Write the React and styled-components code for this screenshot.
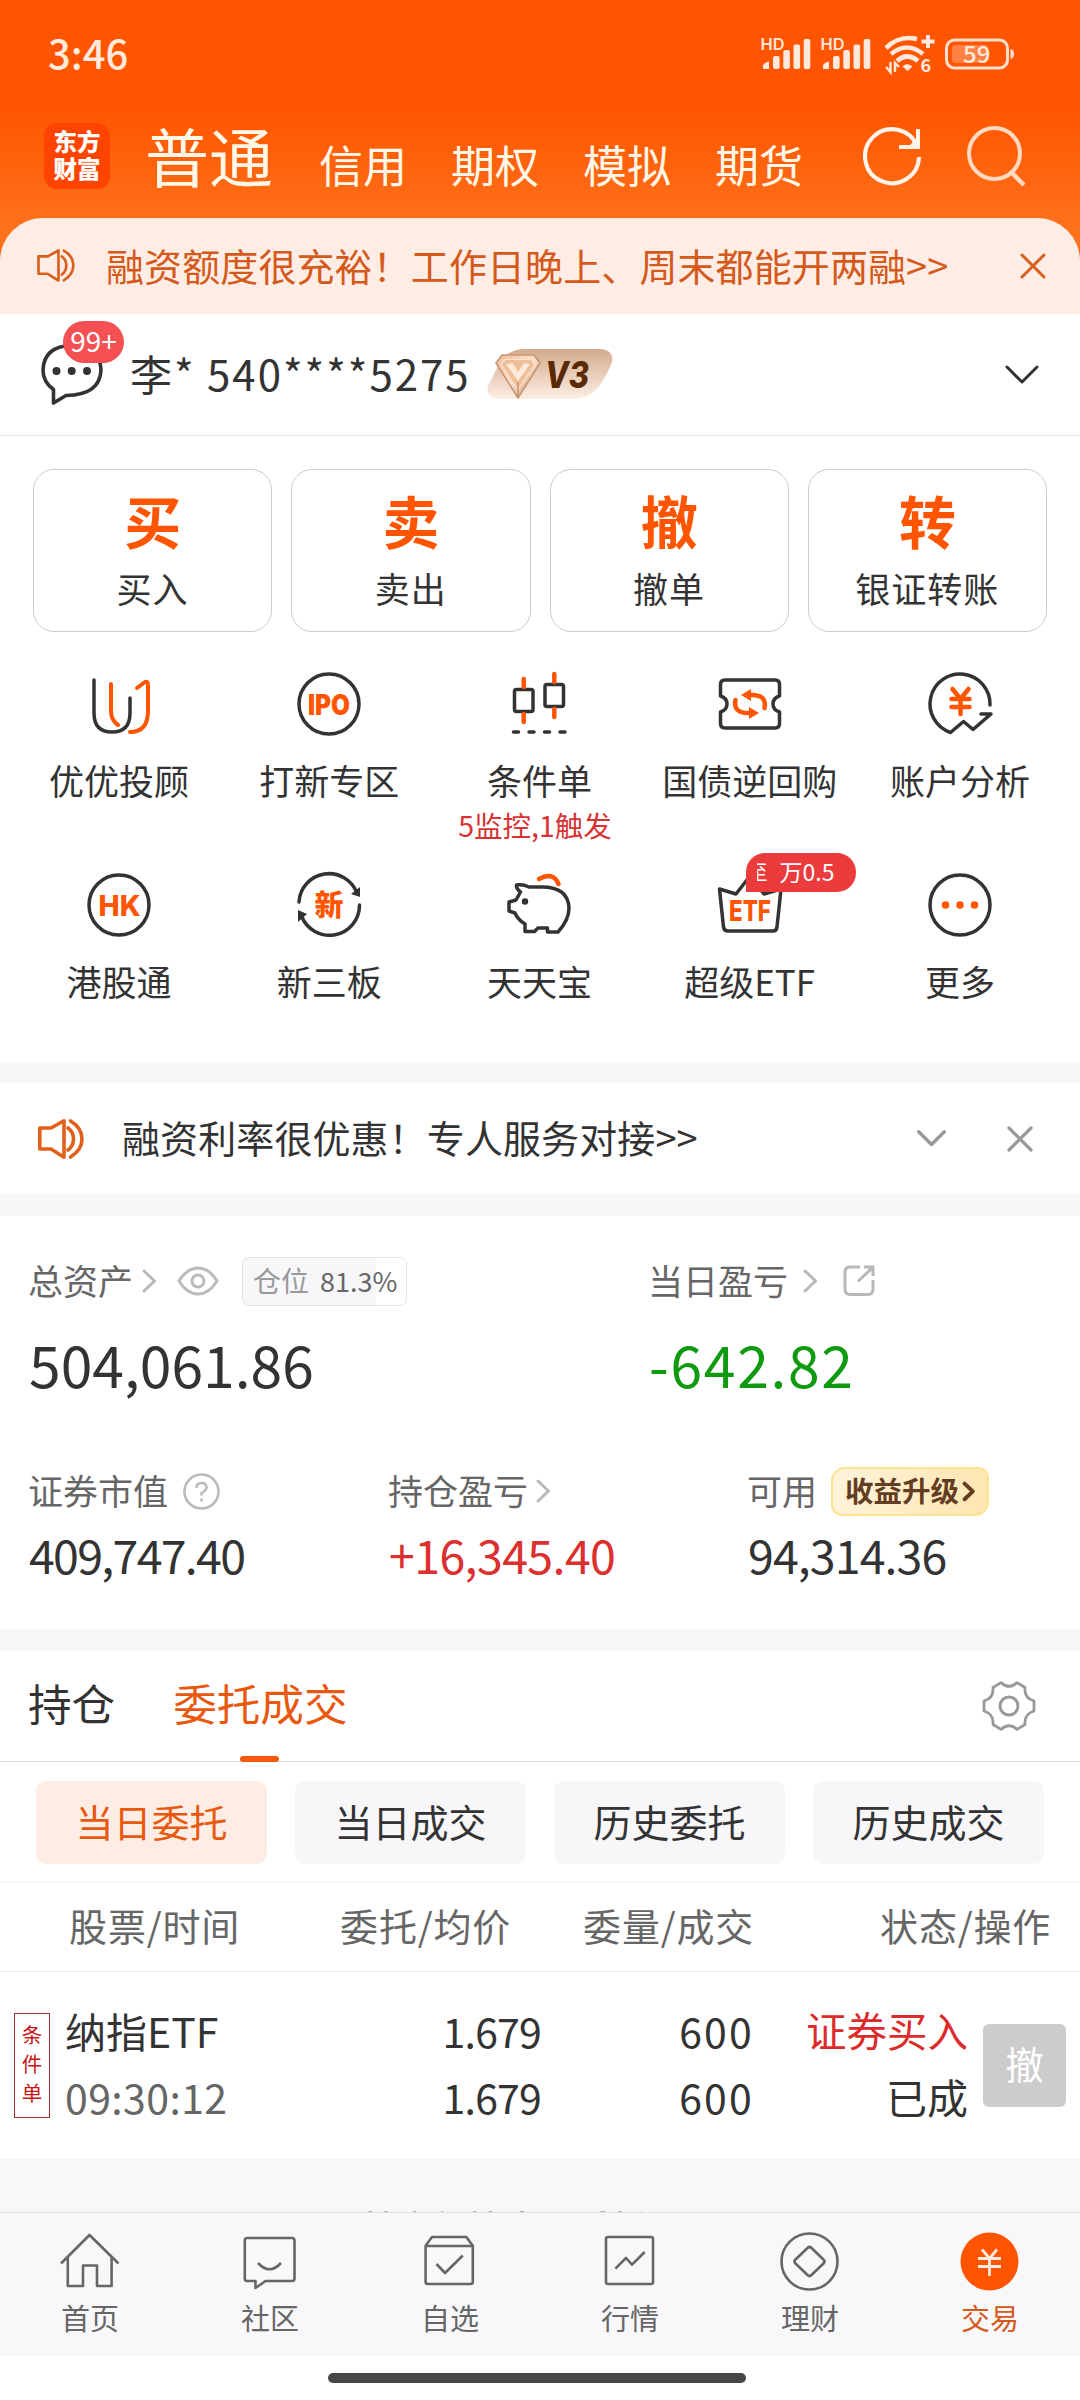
import React from 'react';
import styled, { createGlobalStyle } from 'styled-components';

const INK = '#333'
const FIRE = '#ff5500'

const Mark = styled.text`
  font-family: Inter, "Noto Sans", sans-serif;
`

const tabs = ['信用', '期权', '模拟', '期货']

const trades = [
  { mark: '买', label: '买入' },
  { mark: '卖', label: '卖出' },
  { mark: '撤', label: '撤单' },
  { mark: '转', label: '银证转账' },
]

const Speaker = ({ width, color, stroke }) => (
  <svg width={width} height={width * 40 / 46} viewBox="0 0 46 40" fill="none" stroke={color} strokeWidth={stroke} strokeLinejoin="round">
    <path d="M1.8 9H13L26 1.8V38.2L13 30H1.8Z" />
    <path d="M30 9Q35.5 13 35.5 20T30 31M32.5 2Q44 9 44 20T32.5 38" strokeLinecap="round" />
  </svg>
)

const Cross = ({ size, color, stroke = 3 }) => (
  <svg width={size} height={size} viewBox="0 0 26 26" fill="none" stroke={color} strokeWidth={stroke} strokeLinecap="round">
    <path d="M2 2L24 24M24 2L2 24" />
  </svg>
)

const Down = ({ width, color, stroke = 3 }) => (
  <svg width={width} height={width * 0.56} viewBox="0 0 34 19" fill="none" stroke={color} strokeWidth={stroke} strokeLinecap="round" strokeLinejoin="round">
    <path d="M2 2L17 17L32 2" />
  </svg>
)

const Next = ({ color = '#b8b8b8', stroke = 3, width = 14 }) => (
  <svg width={width} height={width * 24 / 14} viewBox="0 0 14 24" fill="none" stroke={color} strokeWidth={stroke} strokeLinecap="round" strokeLinejoin="round">
    <path d="M2 2L12.5 12L2 22" />
  </svg>
)

const Signal = () => (
  <svg width="50" height="34" viewBox="0 0 50 34" fill="#ffe8dc">
    <Mark x="-0.5" y="13" fontSize="16" fontWeight="600" textLength="24" lengthAdjust="spacingAndGlyphs">HD</Mark>
    <path d="M2 32V29Q2 26 8 24.500V32Q8 32 8 32Z" />
    <rect x="12" y="19" width="6.600" height="13" rx="2" />
    <rect x="22.300" y="13" width="6.600" height="19" rx="2" />
    <rect x="32.500" y="7.500" width="6.600" height="24.500" rx="2" />
    <rect x="42.700" y="2" width="6.600" height="30" rx="2" />
  </svg>
)

const Wifi = () => (
  <svg width="50" height="38" viewBox="0 0 50 38" fill="none" stroke="#ffe8dc" strokeWidth="4.600">
    <path d="M1 13Q14 0 32 4" />
    <path d="M6 19Q22 6 38 19" />
    <path d="M12 26Q22 17 33 26" />
    <path d="M17.500 31.500Q22 27 27.500 31.500L22.500 36Z" fill="#ffe8dc" stroke="none" />
    <path d="M43 0V13M36.500 6.500H49.500" strokeWidth="4" />
    <path d="M5.500 27V37L1 32M10 37V28L14 32" strokeWidth="2.400" />
    <text x="35.500" y="37" fontSize="18" fontWeight="700" fill="#ffe8dc" stroke="none">6</text>
  </svg>
)

const Battery = () => (
  <svg width="70" height="32" viewBox="0 0 70 32">
    <rect x="1.500" y="2" width="61" height="28" rx="8" fill="none" stroke="#ffe0cf" strokeWidth="3" />
    <rect x="7" y="7" width="36" height="18" rx="4" fill="#ff8244" />
    <path d="M65.500 11Q69 11.500 69 16T65.500 21Z" fill="#ffe0cf" />
    <text x="18" y="24.500" fontSize="24" fontWeight="500" fill="#ffe8dc">59</text>
  </svg>
)

const Gem = () => (
  <svg width="126" height="52" viewBox="0 0 126 52">
    <defs>
      <linearGradient id="plate" x1="0" y1="0" x2="0" y2="1">
        <stop offset="0" stopColor="#d3ab8c" />
        <stop offset="1" stopColor="#fdeee3" />
      </linearGradient>
      <linearGradient id="stone" x1="0" y1="0" x2="1" y2="1">
        <stop offset="0" stopColor="#eebd98" />
        <stop offset="0.500" stopColor="#fbe0c9" />
        <stop offset="1" stopColor="#c08a63" />
      </linearGradient>
    </defs>
    <path d="M38 0H113Q127 1 125 13Q121 24 113 36Q103 50 84 50H11Q-2 49 1 37L12 15Q20 0 38 0Z" fill="url(#plate)" />
    <path d="M15 6H47L53 14L31 49L9 14Z" fill="url(#stone)" stroke="#c89674" strokeWidth="1.600" strokeLinejoin="round" />
    <path d="M18 10.500H44L48 15L31 41L14 15Z" fill="#efbf9a" stroke="#fbe3d0" strokeWidth="1.200" />
    <path d="M19 15L26 14.500L31 23L37 14.500L43 15L31 32Z" fill="#fdeadb" />
    <path d="M31 33V47" stroke="#b98560" strokeWidth="1.200" />
    <Mark x="58" y="39" fontSize="37" fontWeight="800" fontStyle="italic" fill="#5a2a06" textLength="44" lengthAdjust="spacingAndGlyphs">V3</Mark>
  </svg>
)

// feature glyphs share one 70x70 canvas
const glyphs = {
  advisor: (
    <>
      <path d="M10 11V44Q10 63 28 63T46 44V29" />
      <path d="M27 15V42Q27 51 34 56M53 19L61 13Q64 12 64 16V42Q64 63 46 63" stroke={FIRE} strokeWidth="4" />
    </>
  ),
  ipo: (
    <>
      <circle cx="35" cy="35" r="30" />
      <Mark x="14" y="45.500" fontSize="28" fontWeight="900" textLength="42" lengthAdjust="spacingAndGlyphs" fill={FIRE} stroke="none">IPO</Mark>
    </>
  ),
  candle: (
    <>
      <rect x="10.500" y="20.500" width="18.500" height="22" rx="2" />
      <rect x="41" y="15.500" width="18.500" height="22" rx="2" />
      <path d="M19.700 10V18M19.700 45V53M50.300 5V13M50.300 40V48" stroke={FIRE} strokeWidth="4.500" />
      <path d="M9.500 63H14.500M25 63H30M40.500 63H45.500M56 63H61" />
    </>
  ),
  bond: (
    <>
      <path d="M10 11H60Q64.500 11 64.500 15.500V27Q58 29 58 35T64.500 43V54.500Q64.500 59 60 59H10Q5.500 59 5.500 54.500V43Q12 41 12 35T5.500 27V15.500Q5.500 11 10 11Z" />
      <path d="M20.500 31Q18 44 33 44H36M49.500 39Q52 26 37 26H34" stroke={FIRE} strokeWidth="4.500" />
      <path d="M36 20V32L26 26ZM34 38V50L44 44Z" fill={FIRE} stroke="none" />
    </>
  ),
  analysis: (
    <>
      <path d="M65 36A30 30 0 1 0 25.500 63.500L38.500 52.500L48 60.500L66 45H56" />
      <path d="M27.500 20L35.500 30L43.500 20M35.500 30V45M26.500 30H44.500M26.500 38H44.500" stroke={FIRE} strokeWidth="4.500" />
    </>
  ),
  hk: (
    <>
      <circle cx="35" cy="35" r="30" />
      <Mark x="14.500" y="45.500" fontSize="28.500" fontWeight="800" textLength="42" lengthAdjust="spacingAndGlyphs" fill={FIRE} stroke="none">HK</Mark>
    </>
  ),
  board: (
    <>
      <path d="M5 32A30 30 0 0 1 63 23M65.500 35A30 30 0 0 1 7.500 46" />
      <path d="M66 17V27L57 24ZM4 52V40L13 44Z" fill={INK} stroke="none" />
      <text x="20.500" y="46" fontSize="29" fontWeight="900" fill={FIRE} stroke="none">新</text>
    </>
  ),
  pig: (
    <>
      <path d="M25 17Q19 14 12.500 15Q12 19 16.500 22L12 30L5 32V41L11 43Q14 50 21 54V61.500H30.500L34 58H43.500V62H54Q65 50 65 38Q64 17 38 17Q31 17 25 17Z" />
      <circle cx="21" cy="31.500" r="3.200" fill={INK} stroke="none" />
      <path d="M35 9Q49 1 54.500 14" stroke={FIRE} strokeWidth="4.500" />
    </>
  ),
  etf: (
    <>
      <path d="M4.500 19L21 24L35 6L49 24L66 19L62 57Q61.500 61 58 61H13Q9 61 8.500 57Z" />
      <Mark x="14" y="51" fontSize="28" fontWeight="800" textLength="42" lengthAdjust="spacingAndGlyphs" fill={FIRE} stroke="none">ETF</Mark>
    </>
  ),
  more: (
    <>
      <circle cx="35" cy="35" r="30" />
      <path d="M20.500 35h.01M35 35h.01M49.500 35h.01" stroke={FIRE} strokeWidth="7.500" />
    </>
  ),
}

const features = [
  { icon: 'advisor', label: '优优投顾' },
  { icon: 'ipo', label: '打新专区' },
  { icon: 'candle', label: '条件单', sub: '5监控,1触发' },
  { icon: 'bond', label: '国债逆回购' },
  { icon: 'analysis', label: '账户分析' },
  { icon: 'hk', label: '港股通' },
  { icon: 'board', label: '新三板' },
  { icon: 'pig', label: '天天宝' },
  { icon: 'etf', label: '超级ETF', promo: true },
  { icon: 'more', label: '更多' },
]

const navItems = [
  {
    label: '首页',
    icon: <path d="M1 31.500L29.500 3L58.500 31.500M7.800 25.500V54H23V33.500H37V54H51.600V25.500" />,
  },
  {
    label: '社区',
    icon: <path d="M7 6H52Q54.500 6 54.500 8.500V46.500Q54.500 49 52 49H25.500L15.500 56V49H7Q4.800 49 4.800 46.500V8.500Q4.800 6 7 6ZM18 31Q29.500 43.500 41 31" />,
  },
  {
    label: '自选',
    icon: <path d="M5.600 13.700L12 5H46.300L52.800 13.700V50Q52.800 52 50.500 52H8Q5.600 52 5.600 50ZM5.600 14H52.800M16.500 32L25 41L42.800 23.500" />,
  },
  {
    label: '行情',
    icon: <path d="M8 5H51Q53 5 53 7V50Q53 52 51 52H8Q6 52 6 50V7Q6 5 8 5ZM15.400 36.700L26 26L32 32.700L44.700 20" />,
  },
  {
    label: '理财',
    icon: (
      <>
        <circle cx="29.500" cy="29.500" r="28" />
        <path d="M27.500 16Q29.500 14 31.500 16L43.500 27.500Q45.500 29.500 43.500 31.500L31.500 43Q29.500 45 27.500 43L15.500 31.500Q13.500 29.500 15.500 27.500Z" />
      </>
    ),
  },
  {
    label: '交易',
    active: true,
    icon: (
      <>
        <circle cx="29.500" cy="29.500" r="29" fill={FIRE} stroke="none" />
        <path d="M22 17.500L29.500 26.500L37 17.500M29.500 26.500V44M18 26.500H41M18 34.500H41" stroke="#ffeadd" strokeWidth="2.800" />
      </>
    ),
  },
]

const App = () => {
  return (
    <Page>
      <GlobalStyle />
      <Top>
        <StatusBar>
          <Clock>3:46</Clock>
          <Signal />
          <Signal />
          <Gap $w={-6} />
          <Wifi />
          <Battery />
        </StatusBar>
        <Header>
          <Logo>
            <span>东方</span>
            <span>财富</span>
          </Logo>
          <MainTab>普通</MainTab>
          {tabs.map(tab => <Tab key={tab}>{tab}</Tab>)}
          <HeaderIcons>
            <svg width="60" height="60" viewBox="0 0 60 60" fill="none" stroke="#fff4ea" strokeWidth="4">
              <path d="M57 31A27 27 0 1 1 55 20M37 21H56V3" />
              <path d="M46 21H56V11Z" fill="#fff4ea" stroke="none" />
            </svg>
            <svg width="62" height="62" viewBox="0 0 62 62" fill="none" stroke="#ffd9c0" strokeWidth="4">
              <circle cx="28.500" cy="28.500" r="25.500" />
              <path d="M45 47L58 60" strokeWidth="4.500" />
            </svg>
          </HeaderIcons>
        </Header>
        <Banner>
          <Speaker width={38} color="#d95f1c" stroke={3.2} />
          <BannerText>融资额度很充裕！工作日晚上、周末都能开两融&gt;&gt;</BannerText>
          <Cross size={26} color="#d95f1c" />
        </Banner>
      </Top>

      <Account>
        <Message>
          <svg width="62" height="62" viewBox="0 0 62 62" fill="none" stroke={INK} strokeWidth="3.600" strokeLinejoin="round">
            <path d="M12.500 59V45.500Q2 38 2 26Q3 2 31 1.500Q59 2 60 26Q59 51 25 51.500Z" />
            <path d="M15.500 27h.01M30.700 27h.01M46 27h.01" strokeWidth="8" strokeLinecap="round" />
          </svg>
          <Unread>99+</Unread>
        </Message>
        <AccountName>李* 540****5275</AccountName>
        <Gem />
        <Push />
        <Down width={34} color={INK} />
      </Account>

      <Trades>
        {trades.map(item => (
          <TradeCard key={item.label}>
            <TradeMark>{item.mark}</TradeMark>
            <TradeLabel>{item.label}</TradeLabel>
          </TradeCard>
        ))}
      </Trades>

      <Features>
        {features.map(item => (
          <Feature key={item.label}>
            <svg width="70" height="70" viewBox="0 0 70 70" fill="none" stroke={INK} strokeWidth="3.500" strokeLinecap="round" strokeLinejoin="round">
              {glyphs[item.icon]}
            </svg>
            {item.promo && <Promo><Cut>至</Cut>万0.5</Promo>}
            <FeatureLabel>{item.label}</FeatureLabel>
            {item.sub && <FeatureSub>{item.sub}</FeatureSub>}
          </Feature>
        ))}
      </Features>

      <Notice>
        <Speaker width={46} color="#e3601a" stroke={3.6} />
        <NoticeText>融资利率很优惠！专人服务对接&gt;&gt;</NoticeText>
        <Down width={29} color="#999" stroke={4} />
        <Cross size={26} color="#999" stroke={3.2} />
      </Notice>

      <Assets>
        <TotalRow>
          <div>
            <Caption>
              <Word>总资产</Word>
              <Gap $w={9} />
              <Next />
              <Gap $w={21} />
              <svg width="42" height="30" viewBox="0 0 42 30" fill="none" stroke="#bbb" strokeWidth="3">
                <path d="M2 15Q10 2 21 2T40 15Q32 28 21 28T2 15Z" />
                <circle cx="21" cy="15" r="6" />
              </svg>
              <Position>仓位<b>81.3%</b></Position>
            </Caption>
            <Total>504,061.86</Total>
          </div>
          <div>
            <Caption>
              <Word>当日盈亏</Word>
              <Gap $w={15} />
              <Next />
              <Gap $w={26} />
              <svg width="32" height="32" viewBox="0 0 32 32" fill="none" stroke="#b8b8b8" strokeWidth="3">
                <path d="M17 2H7Q2 2 2 7V24Q2 29.500 7 29.500H25Q30 29.500 30 24V15M21 2H30V11M30 2L15 16.500" />
              </svg>
            </Caption>
            <Total $color="#0f9a0f" $spacing="1.7px">-642.82</Total>
          </div>
        </TotalRow>
        <SplitRow>
          <div>
            <Caption>
              <Word>证券市值</Word>
              <Gap $w={15} />
              <svg width="37" height="37" viewBox="0 0 37 37" fill="none" stroke="#bbb" strokeWidth="2.600">
                <circle cx="18.500" cy="18.500" r="17" />
                <path d="M13.500 15Q13.500 10 18.500 10T23.500 14.500Q23.500 17 18.500 20V22.500M18.500 25.500V28.500" />
              </svg>
            </Caption>
            <Amount $spacing="-1.7px">409,747.40</Amount>
          </div>
          <div>
            <Caption>
              <Word>持仓盈亏</Word>
              <Gap $w={8} />
              <Next />
            </Caption>
            <Amount $color="#dc2f2f" $spacing="-0.6px">+16,345.40</Amount>
          </div>
          <div>
            <Caption>
              <Word>可用</Word>
              <Upgrade>收益升级<Next width={11} color="#633d22" stroke={5} /></Upgrade>
            </Caption>
            <Amount>94,314.36</Amount>
          </div>
        </SplitRow>
      </Assets>

      <OrderTabs>
        <OrderTab>持仓</OrderTab>
        <OrderTab $active>委托成交</OrderTab>
        <Push />
        <svg width="54" height="54" viewBox="-27 -27 54 54" fill="none" stroke="#999" strokeWidth="2.800" strokeLinejoin="round">
          <path d="M-8 -23.400Q0 -16 8 -23.400L16 -18.500Q15 -8 25 -5V5Q15 8 16 18.500L8 23.400Q0 16 -8 23.400L-16 18.500Q-15 8 -25 5V-5Q-15 -8 -16 -18.500Z" />
          <circle r="9" strokeWidth="3" />
        </svg>
      </OrderTabs>
      <Chips>
        <Chip $active>当日委托</Chip>
        <Chip>当日成交</Chip>
        <Chip>历史委托</Chip>
        <Chip>历史成交</Chip>
      </Chips>
      <TableHead>
        <span>股票/时间</span>
        <span>委托/均价</span>
        <span>委量/成交</span>
        <span>状态/操作</span>
      </TableHead>
      <Order>
        <Tag><span>条</span><span>件</span><span>单</span></Tag>
        <Cell><span>纳指ETF</span><Muted>09:30:12</Muted></Cell>
        <Cell $right $spacing="-0.8px"><span>1.679</span><span>1.679</span></Cell>
        <Cell $right $spacing="2.2px"><span>600</span><span>600</span></Cell>
        <Cell $right><Red>证券买入</Red><span>已成</span></Cell>
        <Revoke>撤</Revoke>
      </Order>
      <Footnote>基金行情当日委托设置</Footnote>

      <Nav>
        {navItems.map(item => (
          <NavItem key={item.label} $active={item.active}>
            <svg width="60" height="60" viewBox="0 0 60 60" fill="none" stroke="#666" strokeWidth="2.600" strokeLinejoin="round">
              {item.icon}
            </svg>
            {item.label}
          </NavItem>
        ))}
      </Nav>
      <Gesture><Pill /></Gesture>
    </Page>
  )
}

const GlobalStyle = createGlobalStyle`
  * {
    box-sizing: border-box;
  }

  body {
    margin: 0;
    background: #fff;
    font-family: "Noto Sans CJK SC", "Noto Sans", sans-serif;
    color: #333;
  }

  svg {
    display: block;
    flex: none;
    overflow: visible;
  }
`

const Page = styled.div`
  display: flex;
  flex-direction: column;
  width: 1080px;
  height: 2400px;
  overflow: hidden;
  white-space: nowrap;
  line-height: 1;
`

const Push = styled.div`
  flex: 1;
`

const Gap = styled.i`
  margin-left: ${({ $w }) => $w}px;
`

const Top = styled.div`
  height: 314px;
  flex: none;
  background: linear-gradient(#ff5500 107px, #ff711b 225px);
`

const StatusBar = styled.div`
  display: flex;
  align-items: center;
  gap: 10px;
  height: 108px;
  padding: 0 65px 4px 48px;

  svg {
    margin-top: 3px;
  }
`

const Clock = styled.div`
  flex: 1;
  font-size: 40px;
  font-weight: 500;
  color: #ffeadd;
`

const Header = styled.div`
  display: flex;
  align-items: center;
  height: 110px;
  padding: 0 52px 14px 44px;
  color: #fff8e8;
`

const Logo = styled.div`
  display: flex;
  flex-direction: column;
  justify-content: center;
  align-items: center;
  width: 66px;
  height: 66px;
  margin-right: 35px;
  padding-bottom: 2px;
  border-radius: 13px;
  background: #ff4400;
  color: #fff;
  font-size: 23.5px;
  font-weight: 900;
  line-height: 27px;
`

const MainTab = styled.div`
  font-size: 64px;
  margin-right: 2px;
  padding-bottom: 5px;
`

const Tab = styled.div`
  width: 132px;
  padding: 16px 0 0 44px;
  font-size: 44px;
`

const HeaderIcons = styled.div`
  display: flex;
  align-items: center;
  justify-content: space-between;
  flex: 1;
  padding-left: 59px;
`

const Banner = styled.div`
  display: flex;
  align-items: center;
  height: 96px;
  padding: 0 34px 0 37px;
  border-radius: 43px 43px 0 0;
  background: #feede5;
`

const BannerText = styled.div`
  flex: 1;
  padding: 0 0 3px 31px;
  font-size: 38px;
  letter-spacing: 0.1px;
  color: #d4591b;
`

const Account = styled.div`
  display: flex;
  align-items: center;
  height: 122px;
  flex: none;
  padding: 0 41px;
  border-bottom: 1px solid #e4e4e4;
`

const Message = styled.div`
  position: relative;
`

const Unread = styled.div`
  position: absolute;
  left: 22px;
  top: -23px;
  width: 61px;
  height: 42px;
  border-radius: 21px;
  background: #f55052;
  color: #fff;
  font-size: 28px;
  line-height: 39px;
  text-align: center;
`

const AccountName = styled.div`
  width: 357px;
  margin-left: 27px;
  padding-bottom: 4px;
  font-size: 42px;
  letter-spacing: 2px;
`

const Trades = styled.div`
  display: grid;
  grid-template-columns: repeat(4, 1fr);
  gap: 19px;
  flex: none;
  padding: 33px 33px 0;
`

const TradeCard = styled.div`
  display: flex;
  flex-direction: column;
  align-items: center;
  height: 163px;
  padding-top: 21px;
  border: 1px solid #ccc;
  border-radius: 21px;
`

const TradeMark = styled.div`
  font-size: 57px;
  font-weight: 700;
  color: ${FIRE};
`

const TradeLabel = styled.div`
  margin-top: 22px;
  font-size: 35px;
  letter-spacing: 1px;
`

const Features = styled.div`
  display: grid;
  grid-template-columns: repeat(5, 1fr);
  grid-auto-rows: 201px;
  height: 430px;
  flex: none;
  padding: 37px 15px 0 14px;
`

const Feature = styled.div`
  position: relative;
  display: flex;
  flex-direction: column;
  align-items: center;
`

const FeatureLabel = styled.div`
  margin-top: 23px;
  font-size: 35px;
`

const FeatureSub = styled.div`
  margin: 14px 9px 0 0;
  font-size: 28.5px;
  color: #d83333;
`

const Promo = styled.div`
  position: absolute;
  left: 101px;
  top: -17px;
  display: flex;
  align-items: center;
  width: 110px;
  height: 39px;
  padding: 0 0 2px 11px;
  border-radius: 19px 19px 19px 0;
  background: #ec3b3c;
  color: #fff;
  font-size: 23px;
`

const Cut = styled.span`
  display: flex;
  justify-content: flex-end;
  width: 11px;
  margin-right: 12px;
  overflow: hidden;
  font-size: 20px;
  line-height: 28px;
`

const Notice = styled.div`
  display: flex;
  align-items: center;
  flex: none;
  height: 154px;
  padding: 0 47px 0 38px;
  border: solid #f7f7fa;
  border-width: 21px 0 22px;

  svg + svg {
    margin-left: 61px;
  }
`

const NoticeText = styled.div`
  flex: 1;
  padding: 0 0 3px 38px;
  font-size: 38px;
  letter-spacing: 0.1px;
`

const Assets = styled.div`
  flex: none;
  height: 435px;
  padding: 39px 0 0 29px;
  border-bottom: 22px solid #f7f7fa;
`

const TotalRow = styled.div`
  display: grid;
  grid-template-columns: 620px 1fr;
  height: 210px;
`

const SplitRow = styled.div`
  display: grid;
  grid-template-columns: 360px 359px 1fr;
`

const Caption = styled.div`
  display: flex;
  align-items: center;
  height: 52px;
  font-size: 35px;
  color: #666;
`

const Word = styled.span`
  margin-left: -1px;
  padding-bottom: 3px;
`

const Position = styled.div`
  display: flex;
  align-items: center;
  width: 165px;
  height: 49px;
  margin-left: 23px;
  padding: 0 0 2px 10px;
  border: 1px solid #e4e4e4;
  border-radius: 7px;
  background: linear-gradient(90deg, #f7f7fa 81.3%, #fff 81.3%);
  font-size: 28px;
  color: #999;

  b {
    margin-left: 11px;
    font-size: 27px;
    font-weight: 400;
    color: #666;
  }
`

const Total = styled.div`
  margin-top: 28px;
  font-size: 57px;
  letter-spacing: ${({ $spacing }) => $spacing || 0};
  color: ${({ $color }) => $color || INK};
`

const Amount = styled.div`
  margin-top: 14px;
  font-size: 46.5px;
  letter-spacing: ${({ $spacing }) => $spacing || '-0.9px'};
  color: ${({ $color }) => $color || INK};
`

const Upgrade = styled.div`
  display: flex;
  align-items: center;
  width: 158px;
  height: 49px;
  margin-left: 14px;
  padding: 0 0 2px 12px;
  border: 2px solid #fbe48f;
  border-radius: 14px 11px 14px 11px;
  background: linear-gradient(100deg, #fff3da, #ffe6b0);
  font-size: 28.5px;
  font-weight: 700;
  color: #633d22;

  svg {
    margin: 2px 0 0 4px;
  }
`

const OrderTabs = styled.div`
  display: flex;
  align-items: center;
  gap: 58px;
  flex: none;
  height: 111px;
  padding: 0 44px 0 28px;
  border-bottom: 1px solid #ddd;
`

const OrderTab = styled.div`
  position: relative;
  padding-bottom: 6px;
  font-size: 43.6px;
  color: ${({ $active }) => $active ? '#e8590f' : INK};

  &::after {
    content: '';
    display: ${({ $active }) => $active ? 'block' : 'none'};
    position: absolute;
    left: 50%;
    bottom: -31px;
    width: 39px;
    height: 6px;
    margin-left: -20px;
    border-radius: 3px;
    background: #f55a0c;
  }
`

const Chips = styled.div`
  display: grid;
  grid-template-columns: repeat(4, 231px);
  gap: 28px;
  flex: none;
  height: 121px;
  padding: 19px 36px;
  border-bottom: 1px solid #f3f3f5;
`

const Chip = styled.div`
  height: 83px;
  border-radius: 10px;
  background: ${({ $active }) => $active ? '#feede5' : '#f7f7fa'};
  color: ${({ $active }) => $active ? '#e8590f' : INK};
  font-size: 38px;
  line-height: 79px;
  text-align: center;
`

const TableHead = styled.div`
  display: grid;
  grid-template-columns: 200px 271px 243px 297px;
  flex: none;
  height: 89px;
  padding-left: 40px;
  border-bottom: 1px solid #ececec;
  font-size: 38px;
  letter-spacing: 0.8px;
  line-height: 84px;
  color: #666;
  text-align: right;
`

const Order = styled.div`
  display: grid;
  grid-template-columns: 36px 191px 300px 213px 214px 83px;
  flex: none;
  height: 187px;
  padding: 25px 14px 0;
`

const Tag = styled.div`
  display: flex;
  flex-direction: column;
  align-items: center;
  height: 105px;
  margin-top: 16px;
  padding-top: 6px;
  border: 1px solid #96302f;
  font-size: 20.5px;
  line-height: 29px;
  color: #c81414;
`

const Cell = styled.div`
  display: flex;
  flex-direction: column;
  align-items: ${({ $right }) => $right ? 'flex-end' : 'flex-start'};
  padding-left: ${({ $right }) => $right ? 0 : '15px'};
  font-size: 41px;
  letter-spacing: ${({ $spacing }) => $spacing || 0};
  line-height: 66px;
`

const Muted = styled.span`
  letter-spacing: 0.4px;
  color: #666;
`

const Red = styled.span`
  font-size: 40.5px;
  color: #dc2b2b;
`

const Revoke = styled.div`
  width: 83px;
  height: 83px;
  margin: 27px 0 0 15px;
  border-radius: 6px;
  background: #ccc;
  color: #fff;
  font-size: 38px;
  line-height: 78px;
  text-align: center;
`

const Footnote = styled.div`
  flex: none;
  height: 53px;
  padding-top: 49px;
  overflow: hidden;
  background: #f7f8fa;
  color: #999;
  font-size: 36px;
  text-align: center;
`

const Nav = styled.div`
  display: grid;
  grid-template-columns: repeat(6, 1fr);
  flex: none;
  height: 144px;
  padding-top: 19px;
  border-top: 1px solid #e0e0e0;
  background: #f8f8fb;
`

const NavItem = styled.div`
  display: flex;
  flex-direction: column;
  align-items: center;
  gap: 11px;
  font-size: 29px;
  color: ${({ $active }) => $active ? '#d4591b' : '#666'};
`

const Gesture = styled.div`
  display: flex;
  justify-content: center;
  padding: 17px 6px 0 0;
`

const Pill = styled.div`
  width: 418px;
  height: 10px;
  border-radius: 5px;
  background: #474747;
`

export default App;
